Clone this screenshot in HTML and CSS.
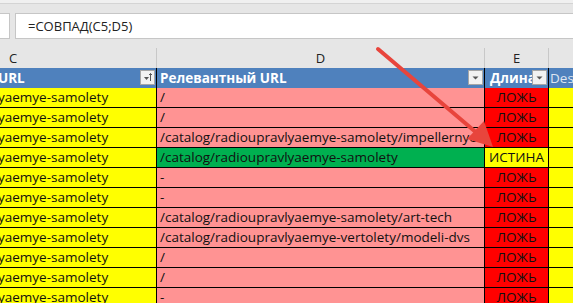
FILE: index.html
```html
<!DOCTYPE html>
<html lang="ru">
<head>
<meta charset="utf-8">
<title>Excel</title>
<link rel="stylesheet" href="styles.css">
</head>
<body>
<div class="app">
  <div class="topstrip"></div>
  <div class="formula-row">
    <div class="namebox"></div>
    <div class="formula">=СОВПАД(C5;D5)</div>
  </div>
  <div class="sheet">
    <div class="colheads">
      <div class="ch ch-c">C</div>
      <div class="ch ch-d">D</div>
      <div class="ch ch-e">E</div>
      <div class="ch ch-f"></div>
    </div>
    <div class="grid">
      <div class="cell hd c">URL<span class="fbtn sort"><svg width="13" height="13" viewBox="0 0 13 13"><path d="M3 6h5l-2.5 3z" fill="#555"/><path d="M9.5 2.5v7.5M8 4l1.5-1.5L11 4" stroke="#555" fill="none" stroke-width="1"/></svg></span></div>
      <div class="cell hd d">Релевантный URL<span class="fbtn"><svg width="13" height="13" viewBox="0 0 13 13"><path d="M3.5 5.5h6l-3 3z" fill="#555"/></svg></span></div>
      <div class="cell hd e">Длина<span class="fbtn"><svg width="13" height="13" viewBox="0 0 13 13"><path d="M3.5 5.5h6l-3 3z" fill="#555"/></svg></span></div>
      <div class="cell hd f">Desc</div>

      <div class="cell y c">yaemye-samolety</div><div class="cell p d">/</div><div class="cell r e">ЛОЖЬ</div><div class="cell y f"></div>
      <div class="cell y c">yaemye-samolety</div><div class="cell p d">/</div><div class="cell r e">ЛОЖЬ</div><div class="cell y f"></div>
      <div class="cell y c">yaemye-samolety</div><div class="cell p d">/catalog/radioupravlyaemye-samolety/impellernye</div><div class="cell r e">ЛОЖЬ</div><div class="cell y f"></div>
      <div class="cell y c">yaemye-samolety</div><div class="cell g d">/catalog/radioupravlyaemye-samolety</div><div class="cell y e">ИСТИНА</div><div class="cell y f"></div>
      <div class="cell y c">yaemye-samolety</div><div class="cell p d">-</div><div class="cell r e">ЛОЖЬ</div><div class="cell y f"></div>
      <div class="cell y c">yaemye-samolety</div><div class="cell p d">-</div><div class="cell r e">ЛОЖЬ</div><div class="cell y f"></div>
      <div class="cell y c">yaemye-samolety</div><div class="cell p d">/catalog/radioupravlyaemye-samolety/art-tech</div><div class="cell r e">ЛОЖЬ</div><div class="cell y f"></div>
      <div class="cell y c">yaemye-samolety</div><div class="cell p d">/catalog/radioupravlyaemye-vertolety/modeli-dvs</div><div class="cell r e">ЛОЖЬ</div><div class="cell y f"></div>
      <div class="cell y c">yaemye-samolety</div><div class="cell p d">/</div><div class="cell r e">ЛОЖЬ</div><div class="cell y f"></div>
      <div class="cell y c">yaemye-samolety</div><div class="cell p d">/</div><div class="cell r e">ЛОЖЬ</div><div class="cell y f"></div>
      <div class="cell y c">yaemye-samolety</div><div class="cell p d">-</div><div class="cell r e">ЛОЖЬ</div><div class="cell y f"></div>
    </div>
    <svg class="arrow" width="573" height="303" viewBox="0 0 573 303">
      <line x1="378" y1="49" x2="478" y2="134" stroke="#e8453c" stroke-width="4" stroke-linecap="round"/>
      <path d="M493 147 L484 121 L467 139 Z" fill="#e8453c"/>
    </svg>
  </div>
</div>
</body>
</html>
```

FILE: styles.css
```css
* { box-sizing: border-box; }
html, body { margin: 0; padding: 0; }
body {
  width: 573px;
  height: 303px;
  overflow: hidden;
  background: #e6e6e6;
  font-family: "Open Sans", "Noto Sans", sans-serif;
}
.app { position: relative; width: 573px; height: 303px; }
.topstrip {
  height: 4px;
  background: #f0f0f0;
  border-bottom: 1px solid #d4d4d4;
}
.formula-row {
  display: flex;
  gap: 5px;
  margin-top: 9px;
  height: 26px;
}
.namebox {
  width: 10px;
  background: #fff;
  border: 1px solid #c6c6c6;
  border-left: none;
}
.formula {
  flex: 1;
  background: #fff;
  border: 1px solid #c6c6c6;
  border-right: none;
  padding-left: 12px;
  font-size: 13px;
  line-height: 24px;
  color: #222;
}
.sheet { position: relative; margin-top: 9px; }
.colheads {
  display: grid;
  grid-template-columns: 157px 328px 64px 1fr;
  height: 20px;
}
.ch {
  border-right: 1px solid #c8c8c8;
  font-size: 13px;
  line-height: 20px;
  color: #222;
  text-align: center;
}
.ch-c { text-align: left; padding-left: 9px; }
.ch-f { border-right: none; }
.grid {
  display: grid;
  grid-template-columns: 157px 328px 64px 1fr;
  grid-auto-rows: 20px;
}
.cell {
  position: relative;
  border-right: 1px solid #000;
  border-bottom: 1px solid #000;
  font-size: 13.5px;
  line-height: 19px;
  white-space: nowrap;
  overflow: hidden;
  color: #111;
  padding-left: 3px;
}
.cell.f { border-right: none; }
.cell.c { padding-left: 0; text-indent: -2px; }
.hd {
  height: 21px;
  background: #4f81bd;
  color: #fff;
  font-weight: bold;
  line-height: 20px;
  overflow: visible;
}
.grid > .hd { grid-row: 1; }
.hd.e { padding-left: 5px; overflow: hidden; }
.hd.f { padding-left: 1px; color: #dfe6f2; font-weight: normal; }
.fbtn {
  position: absolute;
  top: 2px;
  right: 1px;
  width: 15px;
  height: 15px;
  background: #f2f2f2;
  border: 1px solid #a6a6a6;
  display: flex;
  align-items: center;
  justify-content: center;
}
.y { background: #ffff00; }
.p { background: #ff9393; }
.r { background: #ff0000; text-align: center; padding-left: 0; }
.e.y { text-align: center; padding-left: 0; }
.g { background: #00b050; }
.arrow {
  position: absolute;
  left: 0;
  top: -48px;
  pointer-events: none;
}
```
